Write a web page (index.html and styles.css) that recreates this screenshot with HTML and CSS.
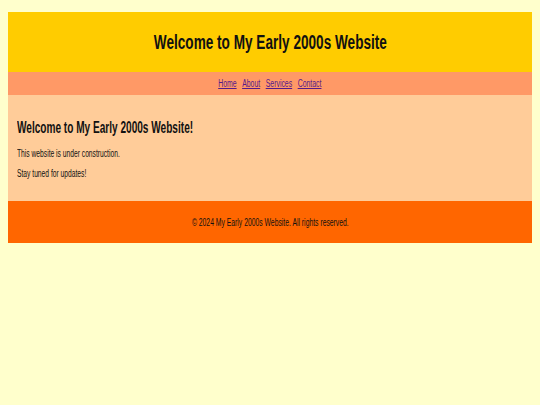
FILE: index.html
```html
<!DOCTYPE html>
<html>
<head>
<meta charset="utf-8">
<title>My Early 2000s Website</title>
<link rel="stylesheet" href="styles.css">
</head>
<body>
<div class="page">
  <header class="header">
    <h1 class="title">Welcome to My Early 2000s Website</h1>
  </header>
  <nav class="nav">
    <div class="nav-links">
      <a href="#">Home</a>
      <a href="#">About</a>
      <a href="#">Services</a>
      <a href="#">Contact</a>
    </div>
  </nav>
  <main class="main">
    <h2 class="subtitle">Welcome to My Early 2000s Website!</h2>
    <p class="text">This website is under construction.</p>
    <p class="text">Stay tuned for updates!</p>
  </main>
  <footer class="footer">
    <p class="copy">&copy; 2024 My Early 2000s Website. All rights reserved.</p>
  </footer>
</div>
</body>
</html>
```
FILE: styles.css
```css
html, body {
  margin: 0;
  padding: 0;
}
body {
  background: #ffffcc;
  font-family: "Liberation Sans", Arial, sans-serif;
  color: #111;
  padding: 12px 8px 8px 8px;
}
.page {
  display: flex;
  flex-direction: column;
}
.header {
  background: #ffcc00;
  height: 60px;
  display: flex;
  align-items: center;
  justify-content: center;
}
.title {
  margin: 0;
  font-size: 20px;
  font-weight: bold;
  white-space: nowrap;
  transform: scaleX(0.68);
}
.nav {
  background: #ff9966;
  height: 23px;
  display: flex;
  align-items: center;
  justify-content: center;
  font-size: 10px;
}
.nav-links {
  display: flex;
  gap: 8px;
  transform: scaleX(0.69);
  white-space: nowrap;
}
.nav a {
  color: #551a8b;
}
.main {
  background: #ffcc99;
  height: 106px;
  padding: 0 9px;
  box-sizing: border-box;
  display: flex;
  flex-direction: column;
  align-items: flex-start;
}
.subtitle {
  margin: 24px 0 10px 0;
  font-size: 16px;
  font-weight: bold;
  white-space: nowrap;
  transform: scaleX(0.63);
  transform-origin: left center;
}
.text {
  margin: 0 0 8px 0;
  font-size: 10px;
  line-height: 12px;
  white-space: nowrap;
  transform: scaleX(0.67);
  transform-origin: left center;
}
.text:first-of-type {
  margin-top: 1px;
}
.footer {
  background: #ff6600;
  height: 42px;
  display: flex;
  align-items: center;
  justify-content: center;
}
.copy {
  margin: 0;
  font-size: 10px;
  white-space: nowrap;
  transform: scaleX(0.68);
}
```
